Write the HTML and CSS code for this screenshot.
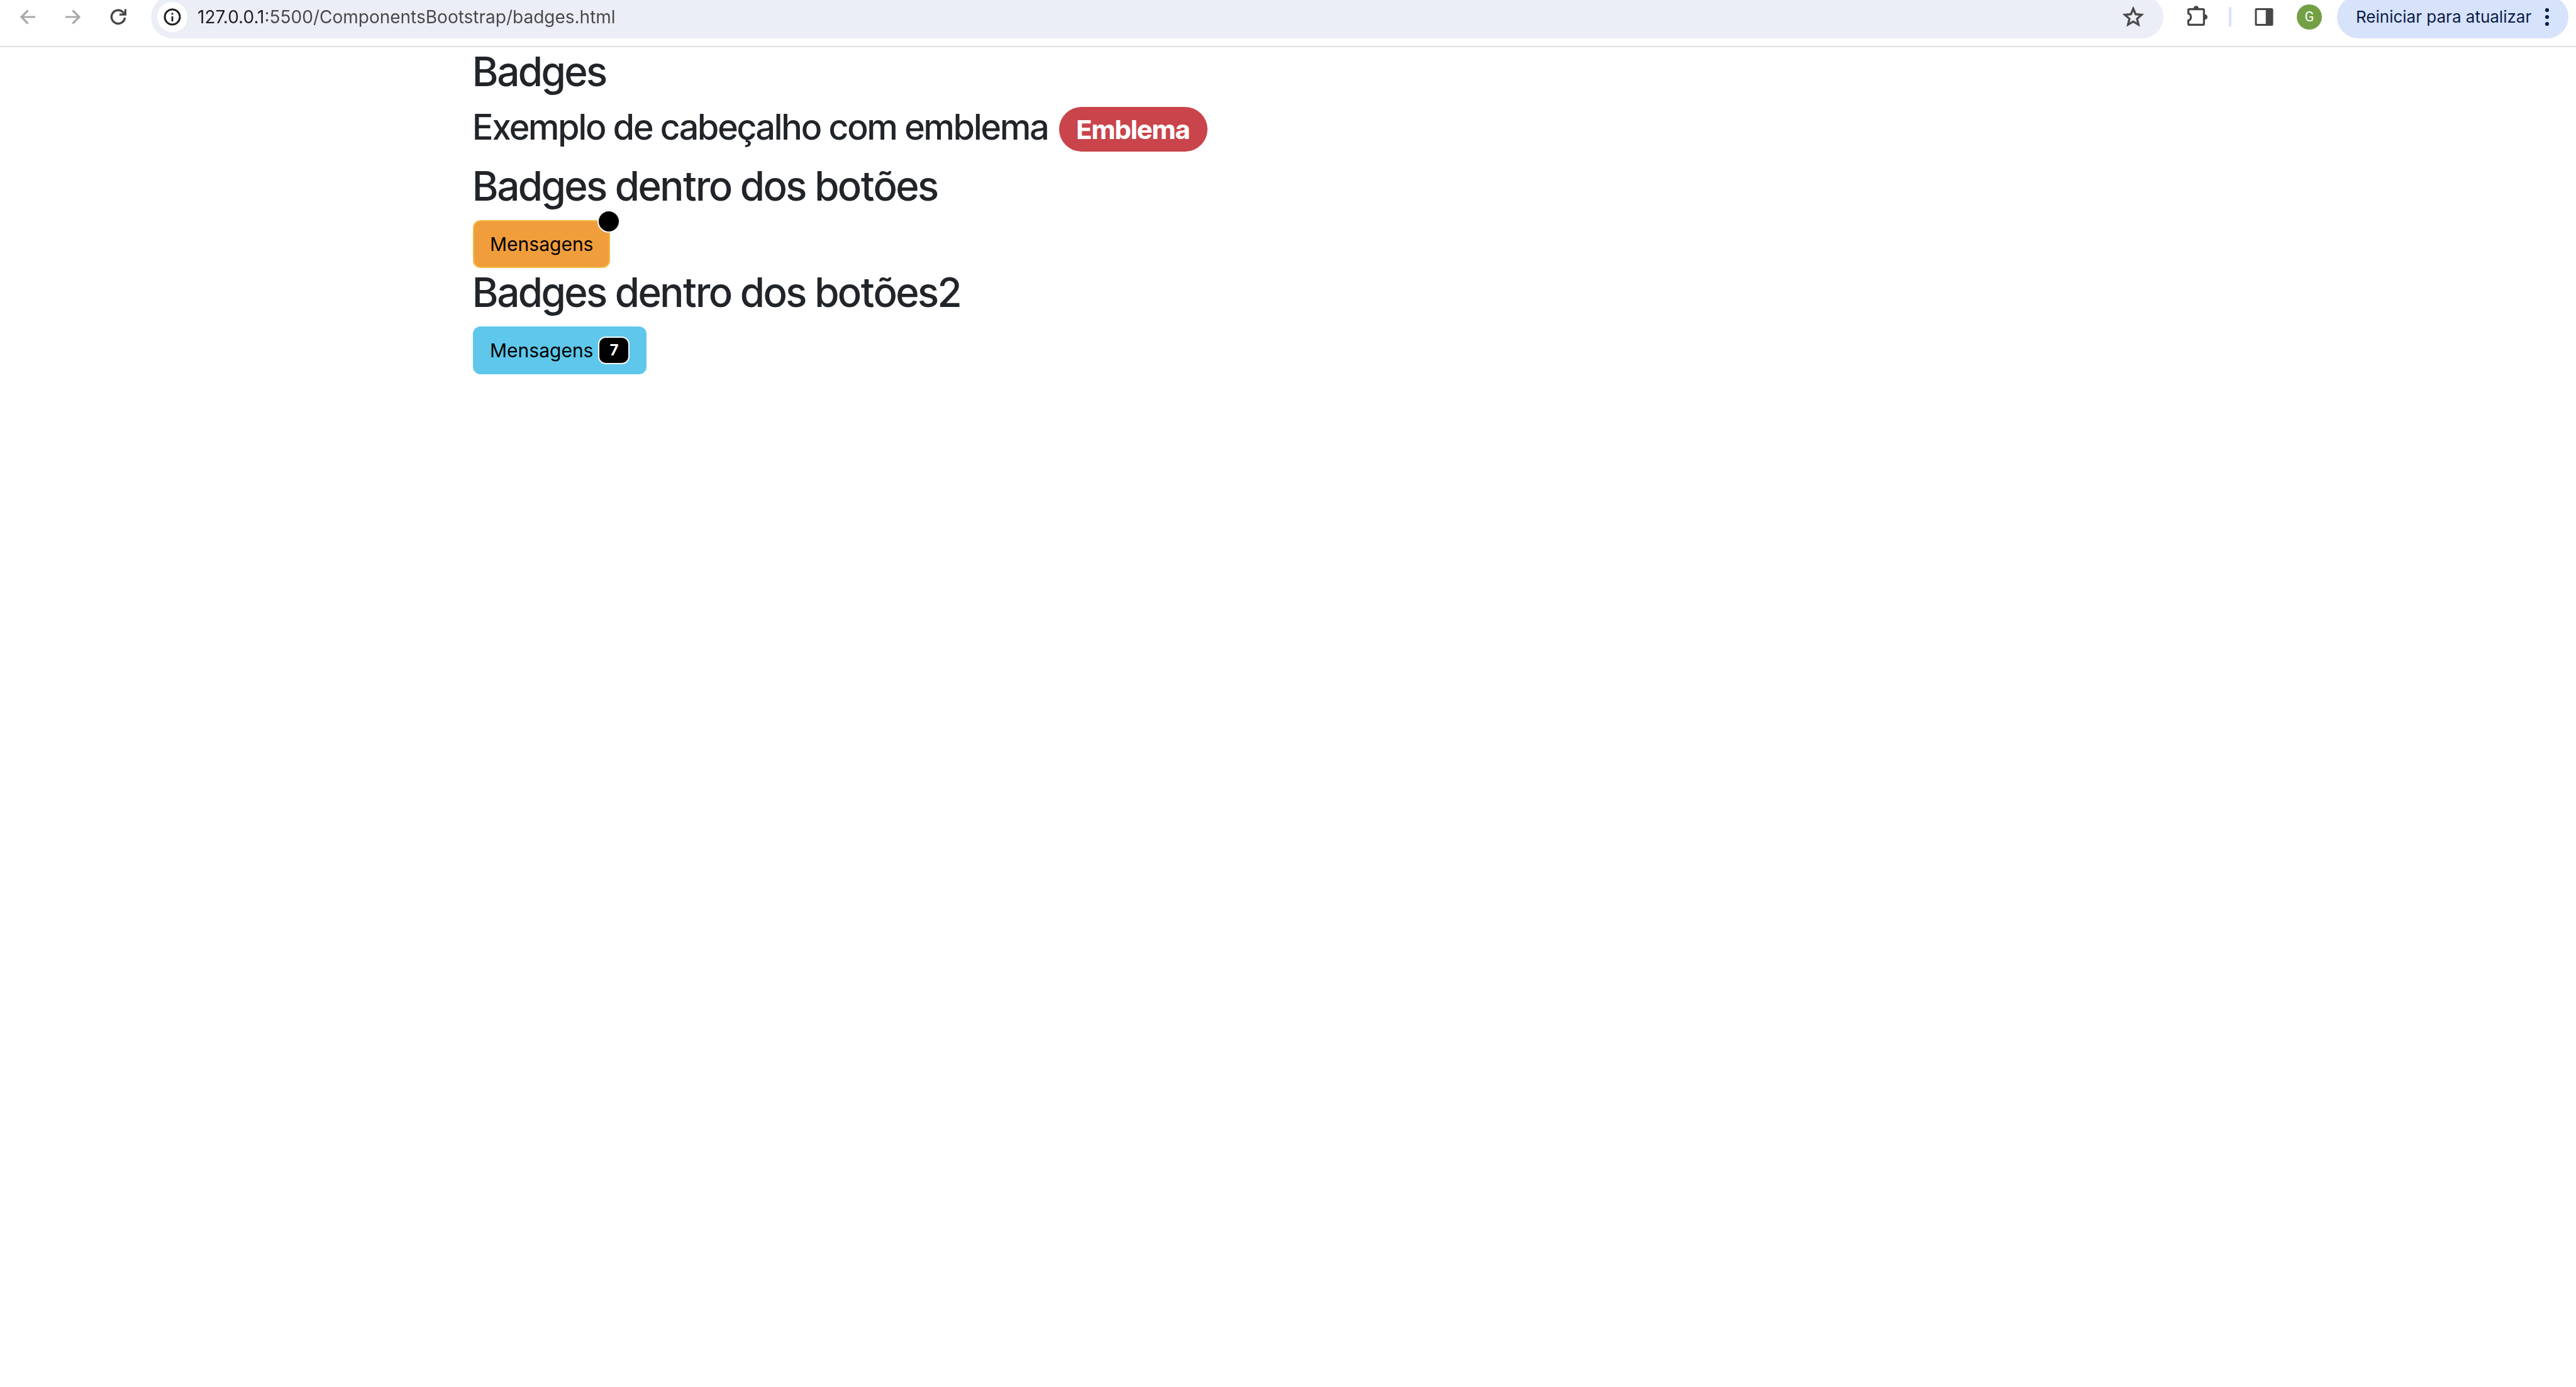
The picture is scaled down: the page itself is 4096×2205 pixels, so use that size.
FILE: index.html
```html
<!DOCTYPE html>
<html lang="pt-BR">
<head>
<meta charset="utf-8">
<meta name="viewport" content="width=device-width, initial-scale=1">
<title>Badges</title>
<link rel="stylesheet" href="styles.css">
</head>
<body>
<header class="toolbar">
  <nav class="nav-buttons" aria-label="Navegação">
    <button class="icon-button" type="button" disabled aria-label="Voltar">
      <svg class="icon" viewBox="0 0 36 36"><path d="M30 18H8M18.500 7.500L8 18l10.500 10.500" fill="none" stroke="#a9a9a9" stroke-width="3.200"/></svg>
    </button>
    <button class="icon-button" type="button" disabled aria-label="Avançar">
      <svg class="icon" viewBox="0 0 36 36"><path d="M6 18h22M17.500 7.500L28 18L17.500 28.500" fill="none" stroke="#a9a9a9" stroke-width="3.200"/></svg>
    </button>
    <button class="icon-button" type="button" aria-label="Recarregar">
      <svg class="icon" viewBox="0 0 36 36"><path d="M28.500 19A10.600 10.600 0 1 1 26 11" fill="none" stroke="#474747" stroke-width="3.400"/><path d="M31 5.500V15.800H20V12.500H24.500L27.700 9.500V5.500z" fill="#474747"/></svg>
    </button>
  </nav>
  <form class="address-bar">
    <button class="site-info" type="button" aria-label="Informações do site">
      <svg class="icon" viewBox="0 0 36 36"><circle cx="18" cy="18" r="12" fill="none" stroke="#1f1f1f" stroke-width="3"/><path d="M16.600 17h2.800v8h-2.800zM16.600 11.500h2.800v2.800h-2.800z" fill="#1f1f1f"/></svg>
    </button>
    <input class="address-input" type="text" aria-label="Endereço" value="127.0.0.1:5500/ComponentsBootstrap/badges.html">
    <button class="icon-button" type="button" aria-label="Adicionar aos favoritos">
      <svg class="icon icon-star" viewBox="0 0 24 24"><path d="M22 9.240l-7.190-.62L12 2 9.190 8.630 2 9.240l5.460 4.730L5.820 21 12 17.270 18.180 21l-1.630-7.030L22 9.240zM12 15.400l-3.760 2.270 1-4.280-3.320-2.880 4.380-.38L12 6.100l1.710 4.040 4.380.38-3.320 2.880 1 4.280L12 15.400z" fill="#474747" stroke="#474747" stroke-width=".4"/></svg>
    </button>
  </form>
  <div class="tools">
    <button class="icon-button" type="button" aria-label="Extensões">
      <svg class="icon" viewBox="0 0 36 36"><path d="M3.600 12.500V7.100Q3.600 5.600 5.100 5.600H26.900Q28.400 5.600 28.400 7.100V28.900Q28.400 30.400 26.900 30.400H5.100Q3.600 30.400 3.600 28.900V23.500C9 22.500 9 13.500 3.600 12.500z" fill="none" stroke="#474747" stroke-width="3.200"/><path d="M11.700 4.500a4.300 4.300 0 0 1 8.600 0zM29.800 13.700a4.300 4.300 0 0 1 0 8.600z" fill="#474747"/></svg>
    </button>
    <span class="divider"></span>
    <button class="icon-button" type="button" aria-label="Painel lateral">
      <svg class="icon" viewBox="0 0 36 36"><rect x="5" y="5.500" width="26" height="25" rx="1" fill="none" stroke="#474747" stroke-width="3"/><path d="M20.700 5H31v26H20.700z" fill="#474747"/></svg>
    </button>
    <button class="icon-button" type="button" aria-label="Perfil"><span class="avatar">G</span></button>
  </div>
  <button class="update-button" type="button">
    <span>Reiniciar para atualizar</span>
    <svg class="dots" viewBox="0 0 8 36"><circle cx="4" cy="7" r="3.100"/><circle cx="4" cy="18" r="3.100"/><circle cx="4" cy="29" r="3.100"/></svg>
  </button>
</header>
<main class="container">
  <h2 class="heading">Badges</h2>
  <h3 class="subheading"><span>Exemplo de cabeçalho com emblema</span> <span class="badge badge-danger">Emblema</span></h3>
  <h2 class="heading">Badges dentro dos botões</h2>
  <button class="btn btn-warning" type="button">Mensagens<span class="dot"></span></button>
  <h2 class="heading">Badges dentro dos botões2</h2>
  <button class="btn btn-info" type="button">Mensagens <span class="badge badge-count">7</span></button>
</main>
</body>
</html>
```
FILE: styles.css
```css
* {
  box-sizing: border-box;
}

body {
  margin: 0;
  background: #fff;
  color: #212529;
  font-family: Inter, "Liberation Sans", sans-serif;
  font-size: 30px;
  line-height: 48px;
}

button,
input {
  margin: 0;
  padding: 0;
  border: 0;
  background: none;
  font: inherit;
}

/* Browser toolbar: its upper edge runs past the top of the window */
.toolbar {
  display: flex;
  align-items: center;
  margin-top: -7px;
  padding: 0 12px 12px 8px;
  border-bottom: 2px solid #e1e1e1;
}

.nav-buttons,
.tools {
  display: flex;
  align-items: center;
}

.icon-button {
  display: flex;
  flex: none;
  align-items: center;
  justify-content: center;
  width: 72px;
  height: 68px;
}

.icon {
  width: 36px;
  height: 36px;
}

.icon-star {
  width: 40px;
  height: 40px;
}

.address-bar {
  display: flex;
  flex: 1;
  align-items: center;
  gap: 16px;
  height: 68px;
  margin: 0 18px 0 16px;
  padding: 0 12px 0 10px;
  border-radius: 34px;
  background: #ebeef6;
}

.site-info {
  display: flex;
  flex: none;
  align-items: center;
  justify-content: center;
  width: 48px;
  height: 48px;
  border-radius: 50%;
  background: #fff;
}

/* The host is darker than the rest of the address */
.address-input {
  flex: 1;
  min-width: 0;
  height: 48px;
  background: linear-gradient(90deg, #1f1f1f 108px, #474747 108px);
  background-clip: text;
  color: #474747;
  font-size: 28px;
  -webkit-text-fill-color: transparent;
}

.divider {
  width: 4px;
  height: 32px;
  margin: 0 16px 0 14px;
  border-radius: 2px;
  background: #d7e2fb;
}

.avatar {
  width: 40px;
  height: 40px;
  border-radius: 50%;
  background: #73a045;
  color: #fff;
  font-family: Roboto, sans-serif;
  font-size: 22px;
  line-height: 40px;
  text-align: center;
}

.update-button {
  display: flex;
  align-items: center;
  justify-content: space-between;
  width: 368px;
  height: 68px;
  margin-left: 8px;
  padding: 0 30px;
  border-radius: 34px;
  background: #d7e2fb;
  color: #0a1c48;
  font-size: 26px;
}

.dots {
  width: 8px;
  height: 36px;
  fill: #0a1c48;
}

.container {
  max-width: 2640px;
  margin: 0 auto;
  padding: 0 24px;
}

.heading,
.subheading {
  margin: 0 0 16px;
  font-family: "Inter Tight", Inter, "Liberation Sans", sans-serif;
  font-weight: 500;
}

.heading {
  font-size: 64px;
  line-height: 77px;
}

.subheading {
  display: flex;
  gap: 16px;
  font-size: 56px;
  line-height: 68px;
}

.badge {
  display: inline-block;
  font-weight: 700;
  text-align: center;
}

.badge-danger {
  height: 71px;
  margin-top: 2px;
  padding: 0 28px;
  border-radius: 36px;
  background: #c9444b;
  color: #fff;
  font-size: 42px;
  line-height: 71px;
}

.btn {
  display: flex;
  position: relative;
  align-items: center;
  gap: 8px;
  height: 76px;
  padding: 0 25px;
  border: 2px solid;
  border-radius: 12px;
  color: #000;
}

.btn-warning {
  border-color: #f3b93f;
  background: #f09d3c;
}

.btn-info {
  border-color: #5ec7eb;
  background: #5ec7eb;
}

.dot {
  position: absolute;
  top: 0;
  left: 100%;
  width: 36px;
  height: 36px;
  border: 2px solid #f8f9fa;
  border-radius: 50%;
  background: #000;
  transform: translate(-50%, -50%);
}

.badge-count {
  width: 50px;
  height: 44px;
  border: 2px solid #f8f9fa;
  border-radius: 12px;
  background: #000;
  color: #fff;
  font-size: 24px;
  line-height: 40px;
}
```
